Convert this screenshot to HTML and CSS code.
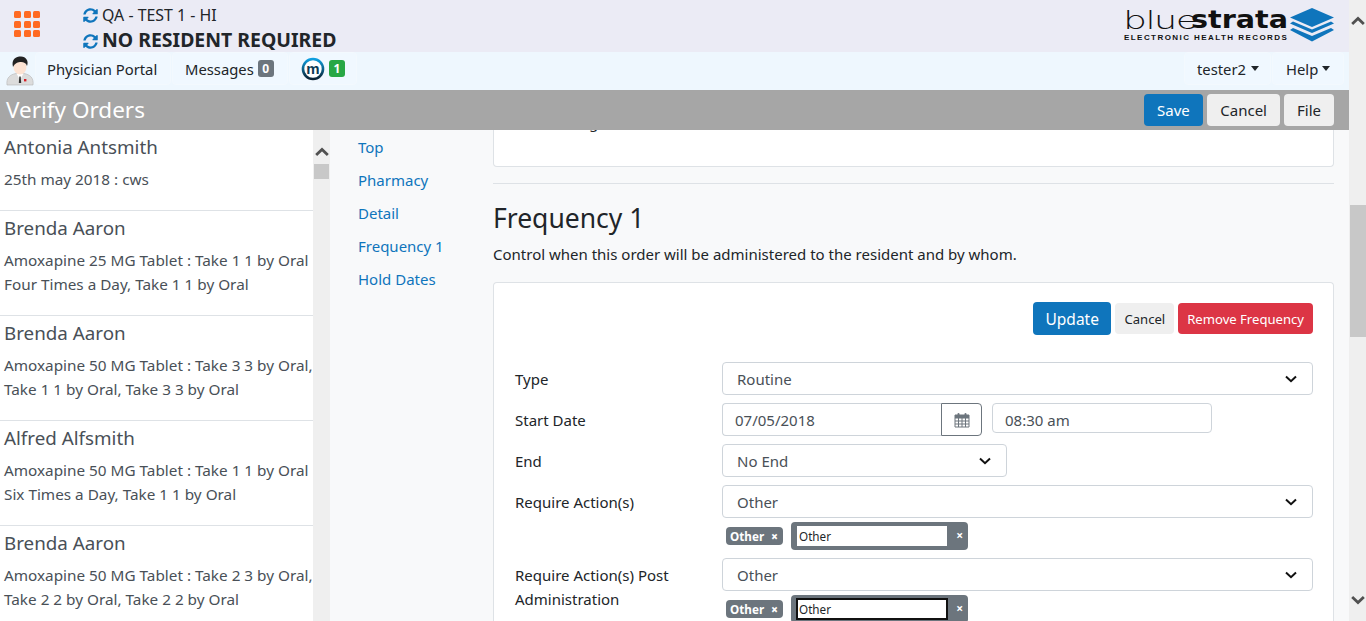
FILE: index.html
```html
<!DOCTYPE html>
<html lang="en">
<head>
    <meta charset="UTF-8">
    <meta name="viewport" content="width=device-width, initial-scale=1.0">
    <title>Verify Orders</title>
    <link rel="stylesheet" href="styles.css">
</head>
<body>
<div class="window">
    <div class="page">
        <header class="top">
            <div class="apps">
                <span></span><span></span><span></span>
                <span></span><span></span><span></span>
                <span></span><span></span><span></span>
            </div>
            <div class="context">
                <div class="facility">
                    <svg class="sync" viewBox="0 0 512 512"><use href="#sync"/></svg>QA - TEST 1 - HI
                </div>
                <div class="resident">
                    <svg class="sync" viewBox="0 0 512 512"><use href="#sync"/></svg>NO RESIDENT REQUIRED
                </div>
            </div>
            <div class="logo">
                <div class="logo-text">
                    <div class="logo-name"><span class="logo-blue">blue</span><span class="logo-strata">strata</span></div>
                    <div class="logo-sub">ELECTRONIC HEALTH RECORDS</div>
                </div>
                <svg class="logo-stack" viewBox="0 0 44 34">
                    <path d="M22 0 L44 9.5 L22 19 L0 9.5 Z" fill="#0f75bc"/>
                    <path d="M3 13.5 L22 21.5 L41 13.5 L44 15.5 L22 25 L0 15.5 Z" fill="#0f75bc"/>
                    <path d="M3 20 L22 28 L41 20 L44 22 L22 33.5 L0 22 Z" fill="#0f75bc"/>
                </svg>
            </div>
        </header>

        <nav class="menu">
            <svg class="avatar" viewBox="0 0 28 30">
                <path d="M1 29 C0 22 4 18.5 10 17.5 L18 17.5 C24 18.5 28 22 27 29 Z" fill="#dcdcdc" stroke="#b5b5b5" stroke-width="0.6"/>
                <path d="M10.5 17.5 L14 24 L17.5 17.5 Z" fill="#fff"/>
                <path d="M13.3 20.5 H14.7 L15.2 27 H12.8 Z" fill="#333"/>
                <rect x="18" y="23" width="2.4" height="2.4" fill="#d8212a"/>
                <ellipse cx="14" cy="11" rx="6.5" ry="7.5" fill="#fde3d3"/>
                <path d="M7 11 C5 3 10 0.5 15 0.5 C20 0.5 23 5 21 10 C20 7 18 6 15 6 C12 6 9 7 7 11 Z" fill="#222"/>
            </svg>
            <a class="menu-item portal">Physician Portal</a>
            <a class="menu-item messages">Messages <span class="badge badge-grey">0</span></a>
            <a class="menu-item meds">
                <svg class="m-logo" viewBox="0 0 24 24">
                    <defs>
                        <linearGradient id="mring" x1="0" y1="0" x2="0" y2="1">
                            <stop offset="0" stop-color="#0e9fe0"/>
                            <stop offset="1" stop-color="#0b2233"/>
                        </linearGradient>
                    </defs>
                    <circle cx="12" cy="12" r="10" fill="#fff" stroke="url(#mring)" stroke-width="2.6"/>
                    <text x="12" y="16.5" text-anchor="middle" class="m-letter">m</text>
                </svg>
                <span class="badge badge-green">1</span>
            </a>
            <a class="menu-item user">tester2<i class="caret"></i></a>
            <a class="menu-item help">Help<i class="caret"></i></a>
        </nav>

        <div class="titlebar">
            <h1>Verify Orders</h1>
            <div class="title-actions">
                <button class="btn btn-blue">Save</button>
                <button class="btn btn-light">Cancel</button>
                <button class="btn btn-light">File</button>
            </div>
        </div>

        <div class="body">
            <aside class="orders">
                <div class="order-list">
                    <div class="order">
                        <div class="order-name">Antonia Antsmith</div>
                        <p>25th may 2018 : cws</p>
                    </div>
                    <div class="order">
                        <div class="order-name">Brenda Aaron</div>
                        <p>Amoxapine 25 MG Tablet : Take 1 1 by Oral<br>Four Times a Day, Take 1 1 by Oral</p>
                    </div>
                    <div class="order">
                        <div class="order-name">Brenda Aaron</div>
                        <p>Amoxapine 50 MG Tablet : Take 3 3 by Oral,<br>Take 1 1 by Oral, Take 3 3 by Oral</p>
                    </div>
                    <div class="order">
                        <div class="order-name">Alfred Alfsmith</div>
                        <p>Amoxapine 50 MG Tablet : Take 1 1 by Oral<br>Six Times a Day, Take 1 1 by Oral</p>
                    </div>
                    <div class="order">
                        <div class="order-name">Brenda Aaron</div>
                        <p>Amoxapine 50 MG Tablet : Take 2 3 by Oral,<br>Take 2 2 by Oral, Take 2 2 by Oral</p>
                    </div>
                </div>
                <div class="scrollbar small">
                    <svg class="arrow" viewBox="0 0 12 8"><path d="M1 6.5 L6 1.8 L11 6.5" /></svg>
                    <div class="thumb"></div>
                </div>
            </aside>

            <div class="sections">
                <a>Top</a>
                <a>Pharmacy</a>
                <a>Detail</a>
                <a>Frequency 1</a>
                <a>Hold Dates</a>
            </div>

            <main class="main">
                <div class="card card-top"><span class="peek">Non-Billing</span></div>
                <hr>
                <h2>Frequency 1</h2>
                <p class="lead">Control when this order will be administered to the resident and by whom.</p>

                <div class="card card-form">
                    <div class="form-actions">
                        <button class="btn btn-blue">Update</button>
                        <button class="btn btn-light btn-small">Cancel</button>
                        <button class="btn btn-red btn-small">Remove Frequency</button>
                    </div>

                    <div class="row">
                        <label>Type</label>
                        <div class="field"><select class="select"><option>Routine</option></select></div>
                    </div>
                    <div class="row">
                        <label>Start Date</label>
                        <div class="field date-field">
                            <div class="date-group">
                                <input class="input" type="text" value="07/05/2018">
                                <button class="cal">
                                    <svg viewBox="0 0 16 16">
                                        <path d="M1 3 H15 V15 H1 Z M1 6 H15 M1 9 H15 M1 12 H15 M4.5 6 V15 M8 6 V15 M11.5 6 V15" fill="none" stroke="#6c757d" stroke-width="1"/>
                                        <path d="M1 3 H15 V6 H1 Z" fill="#6c757d"/>
                                        <rect x="3.5" y="1" width="2" height="3.5" rx="1" fill="#6c757d"/>
                                        <rect x="10.5" y="1" width="2" height="3.5" rx="1" fill="#6c757d"/>
                                    </svg>
                                </button>
                            </div>
                            <input class="input time" type="text" value="08:30 am">
                        </div>
                    </div>
                    <div class="row">
                        <label>End</label>
                        <div class="field"><select class="select narrow"><option>No End</option></select></div>
                    </div>
                    <div class="row">
                        <label>Require Action(s)</label>
                        <div class="field">
                            <select class="select"><option>Other</option></select>
                            <div class="tags">
                                <span class="tag">Other <b>×</b></span>
                                <span class="tag-edit"><input type="text" value="Other"><b>×</b></span>
                            </div>
                        </div>
                    </div>
                    <div class="row">
                        <label>Require Action(s) Post Administration</label>
                        <div class="field">
                            <select class="select"><option>Other</option></select>
                            <div class="tags">
                                <span class="tag">Other <b>×</b></span>
                                <span class="tag-edit focused"><input type="text" value="Other"><b>×</b></span>
                            </div>
                        </div>
                    </div>
                </div>
            </main>
        </div>
    </div>

    <div class="scrollbar large">
        <svg class="arrow" viewBox="0 0 12 8"><path d="M1 6.5 L6 1.8 L11 6.5" /></svg>
        <div class="thumb"></div>
        <svg class="arrow down" viewBox="0 0 12 8"><path d="M1 1.5 L6 6.2 L11 1.5" /></svg>
    </div>
</div>

<svg class="defs" viewBox="0 0 512 512">
    <symbol id="sync" viewBox="0 0 512 512">
        <path fill="#0f75bc" d="M370.72 133.28C339.458 104.008 298.888 87.962 255.848 88c-77.458.068-144.328 53.178-162.791 126.85-1.344 5.363-6.122 9.15-11.651 9.15H24.103c-7.498 0-13.194-6.807-11.807-14.176C33.933 94.924 134.813 8 256 8c66.448 0 126.791 26.136 171.315 68.685L463.03 40.97C478.149 25.851 504 36.559 504 57.941V192c0 13.255-10.745 24-24 24H345.941c-21.382 0-32.09-25.851-16.971-40.971l41.75-41.749zM32 296h134.059c21.382 0 32.09 25.851 16.971 40.971l-41.75 41.75c31.262 29.273 71.835 45.319 114.876 45.28 77.418-.07 144.315-53.144 162.787-126.849 1.344-5.363 6.122-9.15 11.651-9.15h57.304c7.498 0 13.194 6.807 11.807 14.176C478.067 417.076 377.187 504 256 504c-66.448 0-126.791-26.136-171.315-68.685L48.97 471.03C33.851 486.149 8 475.441 8 454.059V320c0-13.255 10.745-24 24-24z"/>
    </symbol>
</svg>
</body>
</html>
```

FILE: styles.css
```css
* {
    box-sizing: border-box;
}

html, body {
    margin: 0;
    height: 100%;
    overflow: hidden;
}

body {
    font-family: "Noto Sans", "Open Sans", sans-serif;
    font-size: 15px;
    line-height: 24px;
    color: #212529;
    background: #f8f9fa;
}

.defs {
    display: none;
}

.window {
    display: flex;
    height: 621px;
}

.page {
    width: 1349px;
    display: flex;
    flex-direction: column;
}

/* top header */
.top {
    height: 52px;
    flex: none;
    display: flex;
    background: #ebebf5;
}

.apps {
    display: grid;
    grid-template-columns: repeat(3, 7px);
    grid-auto-rows: 7px;
    gap: 2.5px;
    width: 83px;
    padding: 11px 0 0 14px;
    align-content: start;
}

.apps span {
    background: #ff6a22;
    border-radius: 1.5px;
}

.context {
    flex: 1;
}

.sync {
    width: 15px;
    height: 15px;
    margin-right: 4px;
    vertical-align: -2px;
}

.facility {
    font-size: 15.9px;
    line-height: 20px;
    margin-top: 5px;
}

.resident {
    font-size: 19.45px;
    font-weight: bold;
    line-height: 24px;
    margin-top: 3px;
}

.logo {
    display: flex;
    gap: 2px;
    padding: 8px 15px 0 0;
}

.logo-text {
    width: 164px;
}

.logo-name {
    display: flex;
    line-height: 24px;
    height: 25px;
    white-space: nowrap;
    color: #111;
}

.logo-blue {
    display: block;
    width: 67px;
    font-family: Inter, sans-serif;
    font-weight: 200;
    font-size: 25px;
    transform: scaleX(1.5);
    transform-origin: left;
}

.logo-strata {
    display: block;
    font-family: "DejaVu Sans", sans-serif;
    font-weight: bold;
    font-size: 24px;
    transform: scaleX(1.19);
    transform-origin: left;
}

.logo-sub {
    font-family: "Liberation Sans", sans-serif;
    font-weight: bold;
    font-size: 8px;
    line-height: 9px;
    letter-spacing: 1.44px;
    white-space: nowrap;
    color: #111;
}

.logo-stack {
    width: 44px;
    height: 34px;
}

/* nav */
.menu {
    height: 38px;
    flex: none;
    display: flex;
    background: #eef7fe;
    padding-left: 6px;
}

.avatar {
    width: 28px;
    height: 30px;
    margin-top: 4px;
    flex: none;
}

.menu-item {
    height: 33px;
    margin-left: 1px;
    display: flex;
    align-items: center;
    justify-content: center;
    gap: 4px;
    font-size: 14.8px;
    background: #f0f8ff;
    border: 1px solid #f3f9fe;
    border-radius: 4px;
    white-space: nowrap;
}

.portal {
    width: 136px;
    justify-content: flex-start;
    padding-left: 11px;
}

.messages {
    width: 116px;
    justify-content: flex-start;
    padding-left: 12px;
}

.meds {
    width: 68px;
    gap: 4px;
    justify-content: flex-start;
    padding-left: 11px;
}

.user {
    width: 87px;
    margin-left: auto;
    justify-content: flex-start;
    padding-left: 12px;
    gap: 5px;
}

.help {
    width: 72px;
    margin-right: 5px;
    justify-content: flex-start;
    padding-left: 13px;
}

.m-logo {
    width: 24px;
    height: 24px;
    margin-top: 1px;
}

.m-letter {
    font-family: "Liberation Sans", sans-serif;
    font-weight: bold;
    font-size: 15px;
    fill: #0b3a55;
}

.badge {
    display: inline-block;
    width: 16px;
    height: 17px;
    border-radius: 3px;
    color: #fff;
    font-size: 12px;
    font-weight: bold;
    line-height: 17px;
    text-align: center;
}

.badge-grey {
    background: #6c757d;
}

.badge-green {
    background: #28a745;
}

.caret {
    display: inline-block;
    border-top: 5px solid #212529;
    border-left: 4.5px solid transparent;
    border-right: 4.5px solid transparent;
    margin-top: -1px;
}

/* title bar */
.titlebar {
    height: 40px;
    flex: none;
    display: flex;
    align-items: center;
    justify-content: space-between;
    background: #a6a6a6;
    padding: 0 15px 0 6px;
    position: relative;
    z-index: 2;
}

.titlebar h1 {
    margin: 0;
    font-size: 22.5px;
    font-weight: normal;
    color: #fff;
}

.title-actions {
    display: flex;
    gap: 4px;
}

.title-actions .btn-blue {
    padding: 0 13.5px;
}

.btn {
    font: inherit;
    height: 32px;
    padding: 0 13px;
    border: none;
    border-radius: 4px;
}

.btn-blue {
    background: #0f75bc;
    color: #fff;
}

.btn-light {
    background: #efefef;
    color: #212529;
}

.btn-red {
    background: #dc3545;
    color: #fff;
}

.btn-small {
    font-size: 13.1px;
    height: 31px;
    padding: 0 9px;
}

/* body */
.body {
    flex: 1;
    min-height: 0;
    display: flex;
    overflow: hidden;
}

.orders {
    width: 330px;
    flex: none;
    display: flex;
    background: #fff;
}

.order-list {
    width: 313px;
    overflow: hidden;
    color: #495057;
}

.order {
    padding: 5px 0 19px 4px;
    border-bottom: 1px solid #dee2e6;
    white-space: nowrap;
}

.order-name {
    font-size: 18.8px;
    line-height: 24px;
}

.order p {
    margin: 8px 0 0;
    font-size: 15.3px;
}

.scrollbar {
    flex: none;
    width: 17px;
    background: #efefef;
    display: flex;
    flex-direction: column;
    align-items: center;
}

.arrow {
    width: 14px;
    height: 10px;
    fill: none;
    stroke: #505050;
    stroke-width: 2.4;
    flex: none;
}

.small .arrow {
    margin-top: 17px;
}

.small .thumb {
    width: 15px;
    height: 15px;
    margin-top: 7px;
    background: #c8c8c8;
}

.large .arrow {
    margin-top: 16px;
}

.large .thumb {
    width: 16px;
    height: 132px;
    background: #c8c8c8;
    margin-top: 179px;
}

.large .down {
    margin-top: auto;
    margin-bottom: 16px;
}

/* section links */
.sections {
    width: 163px;
    flex: none;
    display: flex;
    flex-direction: column;
    padding: 1px 0 0 28px;
    color: #0f75bc;
}

.sections a {
    height: 33px;
    line-height: 33px;
}

/* main column */
.main {
    width: 841px;
    flex: none;
    display: flex;
    flex-direction: column;
}

.card {
    background: #fff;
    border: 1px solid #dee2e6;
    border-radius: 4px;
}

.card-top {
    height: 37px;
    border-top: none;
    border-radius: 0 0 4px 4px;
    overflow: hidden;
    flex: none;
    padding-left: 26px;
}

.peek {
    display: block;
    margin-top: -20px;
}

.main hr {
    margin: 16px 0 0;
    border: none;
    border-top: 1px solid #dee2e6;
    flex: none;
}

.main h2 {
    margin: 16px 0 0;
    font-size: 26.5px;
    line-height: 36px;
    font-weight: normal;
}

.lead {
    margin: 6px 0 0;
}

.card-form {
    flex: 1;
    margin-top: 16px;
    padding: 19px 20px 0;
    border-bottom: none;
    border-radius: 4px 4px 0 0;
    min-height: 0;
}

.form-actions {
    display: flex;
    justify-content: flex-end;
    align-items: center;
    gap: 4px;
    height: 33px;
    margin-bottom: 27px;
}

.form-actions .btn-blue {
    height: 33px;
    font-size: 15.5px;
    padding: 0 12.5px;
}

.row {
    display: grid;
    grid-template-columns: 208px 1fr;
    margin-bottom: 8px;
}

.row label {
    padding: 5px 0 0 1px;
}

.select, .input {
    font: inherit;
    color: #495057;
    height: 33px;
    border: 1px solid #ced4da;
    border-radius: 4px;
    background: #fff;
}

.select {
    width: 100%;
    appearance: none;
    padding: 0 14px;
    background: #fff url("data:image/svg+xml,%3Csvg xmlns='http://www.w3.org/2000/svg' viewBox='0 0 12 8'%3E%3Cpath d='M1 1.5 L6 6.2 L11 1.5' fill='none' stroke='%23111' stroke-width='2'/%3E%3C/svg%3E") no-repeat right 15px top 12px / 12px 8px;
}

.select.narrow {
    width: 285px;
}

.date-field {
    display: flex;
    gap: 10px;
}

.date-group {
    display: flex;
    width: 260px;
}

.input {
    padding: 0 12px;
    min-width: 0;
}

.date-group .input {
    flex: 1;
    border-right: none;
    border-radius: 4px 0 0 4px;
}

.cal {
    width: 41px;
    height: 33px;
    padding: 0;
    border: 1px solid #6c757d;
    border-radius: 0 4px 4px 0;
    background: #fff;
    display: flex;
    align-items: center;
    justify-content: center;
}

.cal svg {
    width: 16px;
    height: 16px;
}

.time {
    width: 220px;
    height: 30px;
    padding-top: 3px;
}

.tags {
    display: flex;
    align-items: center;
    gap: 8px;
    padding: 4px 0 0 4px;
    height: 32px;
}

.tag {
    width: 57px;
    height: 18px;
    display: flex;
    align-items: center;
    justify-content: space-between;
    padding: 0 5px 0 4px;
    background: #6c757d;
    border-radius: 4px;
    color: #fff;
    font-size: 11.7px;
    line-height: 19px;
    font-weight: bold;
}

.tag b, .tag-edit b {
    color: #fff;
    font-size: 12px;
}

.tag-edit {
    width: 177px;
    height: 28px;
    display: flex;
    align-items: center;
    justify-content: space-between;
    padding: 0 5px 0 6px;
    background: #6c757d;
    border-radius: 4px;
}

.tag-edit input {
    width: 150px;
    height: 20px;
    border: none;
    padding: 0 2px;
    font: 11.7px "Noto Sans", sans-serif;
    color: #212529;
    background: #fff;
}

.tag-edit.focused input {
    outline: 2px solid #111;
    outline-offset: -1px;
}
```
